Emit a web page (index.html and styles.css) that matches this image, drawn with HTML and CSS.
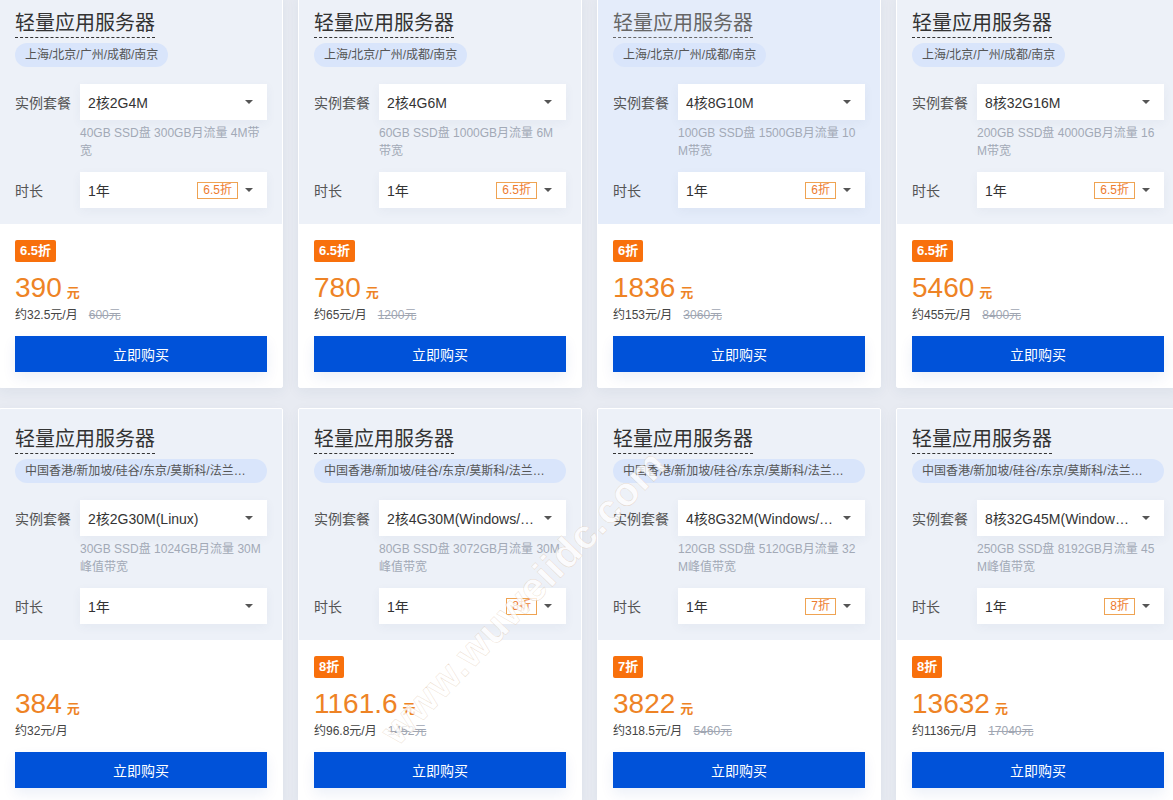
FILE: index.html
```html
<!DOCTYPE html>
<html lang="zh-CN">
<head>
<meta charset="utf-8">
<title>轻量应用服务器</title>
<link rel="stylesheet" href="styles.css">
</head>
<body>
<div class="grid">

  <div class="card">
    <div class="card-top">
      <div class="title-row"><span class="title">轻量应用服务器</span></div>
      <div class="pill-row"><span class="pill">上海/北京/广州/成都/南京</span></div>
      <div class="field field-first">
        <span class="label">实例套餐</span>
        <div class="select"><span class="sel-text">2核2G4M</span><span class="arrow"></span></div>
      </div>
      <div class="desc">40GB SSD盘 300GB月流量 4M带宽</div>
      <div class="field field-second">
        <span class="label">时长</span>
        <div class="select"><span class="sel-text">1年</span><span class="tag">6.5折</span><span class="arrow"></span></div>
      </div>
    </div>
    <div class="card-bottom">
      <span class="badge">6.5折</span>
      <div class="price"><span class="num">390</span><span class="unit">元</span></div>
      <div class="sub">约32.5元/月<del class="orig">600元</del></div>
      <button class="buy">立即购买</button>
    </div>
  </div>

  <div class="card">
    <div class="card-top">
      <div class="title-row"><span class="title">轻量应用服务器</span></div>
      <div class="pill-row"><span class="pill">上海/北京/广州/成都/南京</span></div>
      <div class="field field-first">
        <span class="label">实例套餐</span>
        <div class="select"><span class="sel-text">2核4G6M</span><span class="arrow"></span></div>
      </div>
      <div class="desc">60GB SSD盘 1000GB月流量 6M带宽</div>
      <div class="field field-second">
        <span class="label">时长</span>
        <div class="select"><span class="sel-text">1年</span><span class="tag">6.5折</span><span class="arrow"></span></div>
      </div>
    </div>
    <div class="card-bottom">
      <span class="badge">6.5折</span>
      <div class="price"><span class="num">780</span><span class="unit">元</span></div>
      <div class="sub">约65元/月<del class="orig">1200元</del></div>
      <button class="buy">立即购买</button>
    </div>
  </div>

  <div class="card card-active">
    <div class="card-top">
      <div class="title-row"><span class="title">轻量应用服务器</span></div>
      <div class="pill-row"><span class="pill">上海/北京/广州/成都/南京</span></div>
      <div class="field field-first">
        <span class="label">实例套餐</span>
        <div class="select"><span class="sel-text">4核8G10M</span><span class="arrow"></span></div>
      </div>
      <div class="desc">100GB SSD盘 1500GB月流量 10M带宽</div>
      <div class="field field-second">
        <span class="label">时长</span>
        <div class="select"><span class="sel-text">1年</span><span class="tag">6折</span><span class="arrow"></span></div>
      </div>
    </div>
    <div class="card-bottom">
      <span class="badge">6折</span>
      <div class="price"><span class="num">1836</span><span class="unit">元</span></div>
      <div class="sub">约153元/月<del class="orig">3060元</del></div>
      <button class="buy">立即购买</button>
    </div>
  </div>

  <div class="card">
    <div class="card-top">
      <div class="title-row"><span class="title">轻量应用服务器</span></div>
      <div class="pill-row"><span class="pill">上海/北京/广州/成都/南京</span></div>
      <div class="field field-first">
        <span class="label">实例套餐</span>
        <div class="select"><span class="sel-text">8核32G16M</span><span class="arrow"></span></div>
      </div>
      <div class="desc">200GB SSD盘 4000GB月流量 16M带宽</div>
      <div class="field field-second">
        <span class="label">时长</span>
        <div class="select"><span class="sel-text">1年</span><span class="tag">6.5折</span><span class="arrow"></span></div>
      </div>
    </div>
    <div class="card-bottom">
      <span class="badge">6.5折</span>
      <div class="price"><span class="num">5460</span><span class="unit">元</span></div>
      <div class="sub">约455元/月<del class="orig">8400元</del></div>
      <button class="buy">立即购买</button>
    </div>
  </div>

  <div class="card">
    <div class="card-top">
      <div class="title-row"><span class="title">轻量应用服务器</span></div>
      <div class="pill-row"><span class="pill pill-wide">中国香港/新加坡/硅谷/东京/莫斯科/法兰克福/首尔/孟买/曼谷/弗吉尼亚</span></div>
      <div class="field field-first">
        <span class="label">实例套餐</span>
        <div class="select"><span class="sel-text">2核2G30M(Linux)</span><span class="arrow"></span></div>
      </div>
      <div class="desc">30GB SSD盘 1024GB月流量 30M峰值带宽</div>
      <div class="field field-second">
        <span class="label">时长</span>
        <div class="select"><span class="sel-text">1年</span><span class="arrow"></span></div>
      </div>
    </div>
    <div class="card-bottom">
      <span class="badge badge-empty">无</span>
      <div class="price"><span class="num">384</span><span class="unit">元</span></div>
      <div class="sub">约32元/月</div>
      <button class="buy">立即购买</button>
    </div>
  </div>

  <div class="card">
    <div class="card-top">
      <div class="title-row"><span class="title">轻量应用服务器</span></div>
      <div class="pill-row"><span class="pill pill-wide">中国香港/新加坡/硅谷/东京/莫斯科/法兰克福/首尔/孟买/曼谷/弗吉尼亚</span></div>
      <div class="field field-first">
        <span class="label">实例套餐</span>
        <div class="select"><span class="sel-text">2核4G30M(Windows/Linux)</span><span class="arrow"></span></div>
      </div>
      <div class="desc">80GB SSD盘 3072GB月流量 30M峰值带宽</div>
      <div class="field field-second">
        <span class="label">时长</span>
        <div class="select"><span class="sel-text">1年</span><span class="tag">8折</span><span class="arrow"></span></div>
      </div>
    </div>
    <div class="card-bottom">
      <span class="badge">8折</span>
      <div class="price"><span class="num">1161.6</span><span class="unit">元</span></div>
      <div class="sub">约96.8元/月<del class="orig">1452元</del></div>
      <button class="buy">立即购买</button>
    </div>
  </div>

  <div class="card">
    <div class="card-top">
      <div class="title-row"><span class="title">轻量应用服务器</span></div>
      <div class="pill-row"><span class="pill pill-wide">中国香港/新加坡/硅谷/东京/莫斯科/法兰克福/首尔/孟买/曼谷/弗吉尼亚</span></div>
      <div class="field field-first">
        <span class="label">实例套餐</span>
        <div class="select"><span class="sel-text">4核8G32M(Windows/Linux)</span><span class="arrow"></span></div>
      </div>
      <div class="desc">120GB SSD盘 5120GB月流量 32M峰值带宽</div>
      <div class="field field-second">
        <span class="label">时长</span>
        <div class="select"><span class="sel-text">1年</span><span class="tag">7折</span><span class="arrow"></span></div>
      </div>
    </div>
    <div class="card-bottom">
      <span class="badge">7折</span>
      <div class="price"><span class="num">3822</span><span class="unit">元</span></div>
      <div class="sub">约318.5元/月<del class="orig">5460元</del></div>
      <button class="buy">立即购买</button>
    </div>
  </div>

  <div class="card">
    <div class="card-top">
      <div class="title-row"><span class="title">轻量应用服务器</span></div>
      <div class="pill-row"><span class="pill pill-wide">中国香港/新加坡/硅谷/东京/莫斯科/法兰克福/首尔/孟买/曼谷/弗吉尼亚</span></div>
      <div class="field field-first">
        <span class="label">实例套餐</span>
        <div class="select"><span class="sel-text">8核32G45M(Windows/Linux)</span><span class="arrow"></span></div>
      </div>
      <div class="desc">250GB SSD盘 8192GB月流量 45M峰值带宽</div>
      <div class="field field-second">
        <span class="label">时长</span>
        <div class="select"><span class="sel-text">1年</span><span class="tag">8折</span><span class="arrow"></span></div>
      </div>
    </div>
    <div class="card-bottom">
      <span class="badge">8折</span>
      <div class="price"><span class="num">13632</span><span class="unit">元</span></div>
      <div class="sub">约1136元/月<del class="orig">17040元</del></div>
      <button class="buy">立即购买</button>
    </div>
  </div>

</div>
<div class="watermark">www.wuweiidc.com</div>
</body>
</html>
```

FILE: styles.css
```css
html, body {
  margin: 0;
  padding: 0;
}

body {
  background: #e8ebf2;
  font-family: "Liberation Sans", "Noto Sans CJK SC", sans-serif;
  color: #333;
  overflow: hidden;
  position: relative;
  height: 800px;
}

.grid {
  display: grid;
  grid-template-columns: repeat(4, 284px);
  column-gap: 15px;
  row-gap: 20px;
  margin: -8px 0 0 -1px;
}

.card {
  box-sizing: border-box;
  height: 396px;
  border: 1px solid #fff;
  border-radius: 2px;
  background: #fff;
  overflow: hidden;
  box-shadow: 0 4px 14px rgba(40, 60, 110, 0.06);
}

.card-top {
  background: #edf1f8;
  padding: 16px 15px 16px;
}

.card-active .card-top {
  background: #e4ecfa;
}

.card-active .title {
  color: #666;
  border-bottom-color: #666;
}

.title-row {
  line-height: 28px;
  height: 29px;
}

.title {
  display: inline-block;
  font-size: 20px;
  line-height: 28px;
  color: #333;
  border-bottom: 1px dashed #333;
}

.pill-row {
  margin-top: 5px;
  height: 24px;
}

.pill {
  display: inline-block;
  box-sizing: border-box;
  max-width: 100%;
  height: 24px;
  line-height: 24px;
  padding: 0 10px;
  border-radius: 12px;
  background: #d9e5fb;
  color: #555;
  font-size: 12px;
  white-space: nowrap;
  overflow: hidden;
  text-overflow: ellipsis;
  vertical-align: top;
}

.pill-wide {
  width: 100%;
}

.field {
  display: flex;
  align-items: center;
  height: 36px;
}

.field-first {
  margin-top: 17px;
}

.field-second {
  margin-top: 12px;
}

.label {
  flex: 0 0 65px;
  font-size: 14px;
  color: #555;
}

.select {
  flex: 1;
  min-width: 0;
  height: 36px;
  box-sizing: border-box;
  background: #fff;
  display: flex;
  align-items: center;
  padding: 0 14px 0 8px;
  box-shadow: 0 3px 10px rgba(50, 70, 120, 0.05);
}

.sel-text {
  flex: 1;
  min-width: 0;
  font-size: 14px;
  color: #333;
  white-space: nowrap;
  overflow: hidden;
  text-overflow: ellipsis;
  margin-right: 8px;
}

.tag {
  flex: 0 0 auto;
  box-sizing: border-box;
  height: 17px;
  line-height: 15px;
  padding: 0 5px;
  border: 1px solid #efa352;
  color: #ed7b2f;
  font-size: 12px;
  margin-right: 7px;
}

.arrow {
  flex: 0 0 auto;
  width: 0;
  height: 0;
  border-left: 4px solid transparent;
  border-right: 4px solid transparent;
  border-top: 4px solid #555;
}

.desc {
  margin: 4px 4px 0 65px;
  font-size: 12px;
  line-height: 18px;
  color: #a2a9b6;
  word-break: break-all;
}

.card-bottom {
  padding: 16px 15px 15px;
  background: #fff;
}

.badge {
  display: inline-block;
  height: 22px;
  line-height: 22px;
  padding: 0 5px;
  border-radius: 2px;
  background: #f8700c;
  color: #fff;
  font-size: 13px;
  font-weight: bold;
  vertical-align: top;
}

.badge-empty {
  visibility: hidden;
}

.price {
  margin-top: 9px;
  line-height: 34px;
  height: 34px;
  color: #ee8325;
}

.num {
  font-size: 28px;
}

.unit {
  font-size: 13px;
  font-weight: bold;
  margin-left: 5px;
}

.sub {
  margin-top: 1px;
  font-size: 12px;
  line-height: 18px;
  color: #444;
}

.orig {
  margin-left: 11px;
  color: #a0a6b2;
}

.buy {
  display: block;
  width: 100%;
  height: 36px;
  margin-top: 12px;
  border: none;
  background: #0052d9;
  color: #fff;
  font-family: inherit;
  font-size: 14px;
  cursor: pointer;
  box-shadow: 0 6px 14px rgba(0, 60, 160, 0.08);
}

.watermark {
  position: absolute;
  left: 388px;
  top: 715px;
  font-size: 40px;
  font-weight: bold;
  color: rgba(255, 255, 255, 0.8);
  -webkit-text-stroke: 0.5px rgba(180, 120, 60, 0.25);
  transform: rotate(-46deg);
  transform-origin: left center;
  pointer-events: none;
  white-space: nowrap;
  letter-spacing: 1px;
}
```
